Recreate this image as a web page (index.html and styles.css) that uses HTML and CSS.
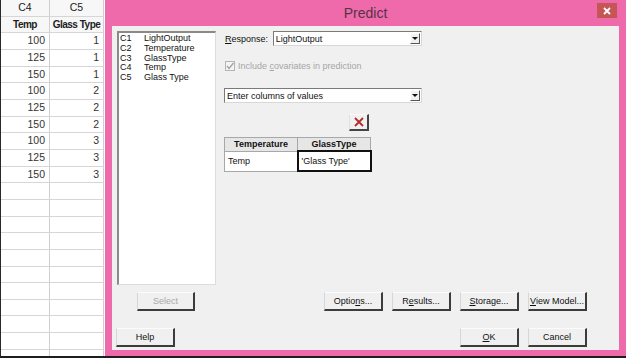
FILE: index.html
```html
<!DOCTYPE html>
<html lang="en">
<head>
  <meta charset="UTF-8" />
  <meta name="viewport" content="width=device-width, initial-scale=1.0" />
  <link rel="stylesheet" href="styles.css">
</head>
<body>
  <div class="screen">
    <div class="sheet">
      <div class="cell head">C4</div><div class="cell head">C5</div>
      <div class="cell head bold">Temp</div><div class="cell head bold">Glass Type</div>
      <div class="cell num">100</div><div class="cell num">1</div>
      <div class="cell num">125</div><div class="cell num">1</div>
      <div class="cell num">150</div><div class="cell num">1</div>
      <div class="cell num">100</div><div class="cell num">2</div>
      <div class="cell num">125</div><div class="cell num">2</div>
      <div class="cell num">150</div><div class="cell num">2</div>
      <div class="cell num">100</div><div class="cell num">3</div>
      <div class="cell num">125</div><div class="cell num">3</div>
      <div class="cell num">150</div><div class="cell num">3</div>
      <div class="cell"></div><div class="cell"></div>
      <div class="cell"></div><div class="cell"></div>
      <div class="cell"></div><div class="cell"></div>
      <div class="cell"></div><div class="cell"></div>
      <div class="cell"></div><div class="cell"></div>
      <div class="cell"></div><div class="cell"></div>
      <div class="cell"></div><div class="cell"></div>
      <div class="cell"></div><div class="cell"></div>
      <div class="cell"></div><div class="cell"></div>
      <div class="cell"></div><div class="cell"></div>
      <div class="cell"></div><div class="cell"></div>
      <div class="cell"></div><div class="cell"></div>
    </div>

    <div class="dialog">
      <div class="titlebar">
        <span></span>
        <span class="title">Predict</span>
        <span class="close">
          <svg width="8" height="8" viewBox="0 0 8 8"><path d="M1 1L7 7M7 1L1 7" stroke="#fff" stroke-width="1.8"/></svg>
        </span>
      </div>

      <div class="panel">
        <div class="main">
          <div class="varlist">
            <span>C1</span><span>LightOutput</span>
            <span>C2</span><span>Temperature</span>
            <span>C3</span><span>GlassType</span>
            <span>C4</span><span>Temp</span>
            <span>C5</span><span>Glass Type</span>
          </div>

          <div class="options">
            <div class="response-row">
              <span class="label"><u>R</u>esponse:</span>
              <div class="combo response">
                <span class="combo-text">LightOutput</span>
                <span class="combo-arrow"></span>
              </div>
            </div>

            <div class="check-row">
              <svg class="checkbox" width="10" height="10" viewBox="0 0 10 10">
                <rect x="0.5" y="0.5" width="9" height="9" fill="#f4f4f4" stroke="#b4b4b4"/>
                <path d="M2 5L4 7.5L8.5 2" fill="none" stroke="#a0a0a0" stroke-width="1.3"/>
              </svg>
              <span>Include <u>c</u>ovariates in prediction</span>
            </div>

            <div class="combo method">
              <span class="combo-text">Enter columns of values</span>
              <span class="combo-arrow"></span>
            </div>

            <div class="grid-box">
              <div class="delete-row">
                <span class="btn-x">
                  <svg width="10" height="10" viewBox="0 0 10 10"><path d="M1 1L9 9M9 1L1 9" stroke="#b52a2a" stroke-width="1.8"/></svg>
                </span>
              </div>
              <table class="covars">
                <tr><th>Temperature</th><th>GlassType</th></tr>
                <tr><td>Temp</td><td class="active">'Glass Type'</td></tr>
              </table>
            </div>
          </div>
        </div>

        <div class="btn-row">
          <span class="btn select disabled">Select</span>
          <span class="spacer"></span>
          <span class="btn">Optio<u>n</u>s...</span>
          <span class="btn">R<u>e</u>sults...</span>
          <span class="btn"><u>S</u>torage...</span>
          <span class="btn"><u>V</u>iew Model...</span>
        </div>

        <div class="btn-row bottom">
          <span class="btn help">Help</span>
          <span class="spacer"></span>
          <span class="btn"><u>O</u>K</span>
          <span class="btn">Cancel</span>
        </div>
      </div>
    </div>
  </div>
</body>
</html>
```

FILE: styles.css
```css
body {
  margin: 0;
  font-family: "Liberation Sans", Arial, sans-serif;
  background: #ffffff;
}

.screen {
  display: flex;
  width: 626px;
  height: 356px;
  border-bottom: 2px solid #1e1e1e;
  overflow: hidden;
}

/* worksheet behind the dialog */

.sheet {
  width: 104px;
  border-left: 1px solid #2a2a2a;
  display: grid;
  grid-template-columns: 49px 54px;
  grid-auto-rows: 16.66px;
  background: #ffffff;
  font-size: 10.5px;
  color: #333333;
  overflow: hidden;
}

.cell {
  border-right: 1px solid #cfcfcf;
  border-bottom: 1px solid #d6d6d6;
  line-height: 15.6px;
  padding-right: 4px;
  white-space: nowrap;
}

.head {
  text-align: center;
  padding-right: 0;
  background: #f7f7f7;
  color: #222222;
}

.bold {
  font-weight: bold;
  font-size: 10px;
  letter-spacing: -0.5px;
}

.num {
  text-align: right;
}

/* dialog */

.dialog {
  flex: 1;
  background: #ef6aaa;
  display: flex;
  flex-direction: column;
  font-size: 9px;
  color: #111111;
}

.titlebar {
  height: 26px;
  display: grid;
  grid-template-columns: 1fr auto 1fr;
  align-items: center;
}

.title {
  font-size: 14px;
  color: #553446;
  padding-bottom: 1px;
}

.close {
  justify-self: end;
  align-self: start;
  margin: 3px 9px 0 0;
  width: 20px;
  height: 15px;
  background: #c65656;
  display: flex;
  align-items: center;
  justify-content: center;
}

.panel {
  flex: 1;
  margin: 0 7px 6px 7px;
  background: #f0f0f0;
  padding: 5px 32px 3px 5px;
  display: flex;
  flex-direction: column;
}

.main {
  display: flex;
  height: 254px;
}

.varlist {
  width: 95px;
  background: #ffffff;
  border-top: 2px solid #8a8a8a;
  border-left: 2px solid #8a8a8a;
  border-right: 1px solid #dcdcdc;
  border-bottom: 1px solid #dcdcdc;
  padding: 1px 0 0 1px;
  display: grid;
  grid-template-columns: 24px 1fr;
  grid-auto-rows: 9.8px;
  align-content: start;
  line-height: 9.8px;
}

.options {
  margin-left: 8px;
  width: 198px;
  display: flex;
  flex-direction: column;
}

.response-row {
  display: flex;
  align-items: center;
}

.label {
  width: 48px;
  padding-left: 1px;
}

.combo {
  height: 13px;
  background: #ffffff;
  border-top: 1px solid #7a7a7a;
  border-left: 1px solid #7a7a7a;
  border-right: 1px solid #d8d8d8;
  border-bottom: 1px solid #d8d8d8;
  display: flex;
  align-items: center;
}

.combo.response {
  width: 148px;
}

.combo.method {
  width: 196px;
  margin-top: 17px;
}

.combo-text {
  flex: 1;
  padding-left: 2px;
}

.combo-arrow {
  width: 10px;
  height: 11px;
  margin-right: 1px;
  background: #f0f0f0;
  border-right: 1px solid #555555;
  border-bottom: 1px solid #555555;
  border-top: 1px solid #ffffff;
  border-left: 1px solid #ffffff;
  box-sizing: border-box;
  display: flex;
  align-items: center;
  justify-content: center;
}

.combo-arrow::after {
  content: "";
  border-left: 3px solid transparent;
  border-right: 3px solid transparent;
  border-top: 3px solid #111111;
}

.check-row {
  margin-top: 15px;
  display: flex;
  align-items: center;
  gap: 3px;
  color: #a6a6a6;
  padding-left: 1px;
}

.grid-box {
  width: 147px;
  margin-top: 11px;
}

.delete-row {
  display: flex;
  justify-content: flex-end;
  padding-right: 2px;
}

.btn-x {
  width: 20px;
  height: 17px;
  box-sizing: border-box;
  border-top: 1px solid #fafafa;
  border-left: 1px solid #e0e0e0;
  border-right: 2px solid #444444;
  border-bottom: 2px solid #444444;
  display: flex;
  align-items: center;
  justify-content: center;
}

.covars {
  margin-top: 6px;
  width: 147px;
  border-collapse: collapse;
  border: 1px solid #a8a8a8;
  table-layout: fixed;
}

.covars th {
  height: 12px;
  padding: 0;
  background: #e6e6e6;
  border: 1px solid #a8a8a8;
  font-weight: bold;
  font-size: 9px;
  width: 72px;
}

.covars td {
  height: 18px;
  padding: 0 3px;
  background: #ffffff;
  border-right: 1px solid #a8a8a8;
  white-space: nowrap;
}

.covars td.active {
  border: 2px solid #111111;
}

/* buttons */

.btn-row {
  display: flex;
  gap: 9px;
  margin-top: 7px;
}

.btn-row.bottom {
  margin-top: 17px;
}

.spacer {
  flex: 1;
}

.btn {
  width: 59px;
  height: 19px;
  box-sizing: border-box;
  background: #f0f0f0;
  border-top: 1px solid #fbfbfb;
  border-left: 1px solid #d6d6d6;
  border-right: 2px solid #3c3c3c;
  border-bottom: 2px solid #3c3c3c;
  display: flex;
  align-items: center;
  justify-content: center;
  white-space: nowrap;
}

.btn.select {
  width: 58px;
  margin-left: 20px;
}

.btn.help {
  margin-left: -1px;
}

.btn.disabled {
  color: #a8a8a8;
}
```
